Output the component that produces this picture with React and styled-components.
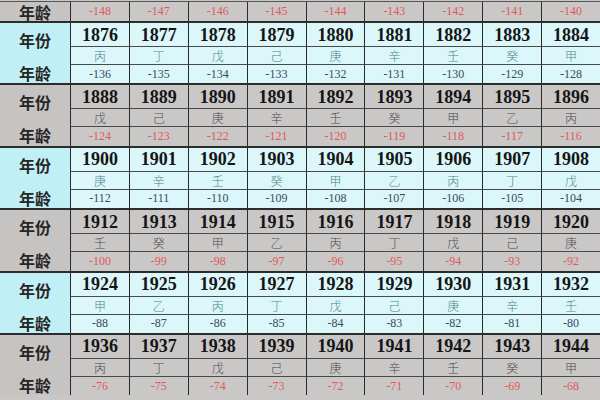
import React from 'react';
import styled, { createGlobalStyle } from 'styled-components';

const STEMS = '甲乙丙丁戊己庚辛壬癸';
const stemOf = (y) => STEMS[(((y - 4) % 10) + 10) % 10];
const ageOf = (y) => y - 2012;

const palettes = {
  gray: { label: '#c6c3c3', cell: '#cac7c7', stem: '#4a4a4a', age: '#e05a5a' },
  cyan: { label: '#c0f0f5', cell: '#dbf7fa', stem: '#4c8487', age: '#3a4a58' },
};

const GlobalStyle = createGlobalStyle`
  html, body {
    margin: 0;
    padding: 0;
    background: #cac7c7;
  }
  body {
    width: 600px;
    height: 400px;
    overflow: hidden;
  }
`;

const Page = styled.div`
  width: 600px;
  height: 400px;
  overflow: hidden;
  padding-top: 1px;
  box-sizing: border-box;
  background: #cac7c7;
`;

const Group = styled.div`
  display: grid;
  grid-template-columns: 70px repeat(9, 1fr);
  grid-template-rows: ${(p) => (p.$partial ? '19px' : '24px 18px 18.4px')};
  border-top: ${(p) => (p.$partial ? '1px solid #555' : '2px solid #2c2c2c')};
  background: ${(p) => palettes[p.$tone].cell};
`;

const Label = styled.div`
  grid-row: 1 / -1;
  display: flex;
  flex-direction: column;
  align-items: center;
  justify-content: ${(p) => (p.$partial ? 'center' : 'flex-start')};
  padding-top: ${(p) => (p.$partial ? '0' : '8px')};
  gap: 15px;
  background: ${(p) => palettes[p.$tone].label};
  font-family: "Noto Sans CJK SC", "Noto Sans", sans-serif;
  font-weight: 700;
  font-size: 16px;
  line-height: 18px;
  color: #262626;
  box-sizing: border-box;
`;

const Cell = styled.div`
  display: flex;
  align-items: center;
  justify-content: center;
  border-left: 1px solid #2a2a2a;
  box-sizing: border-box;
  min-width: 0;
`;

const YearCell = styled(Cell)`
  border-bottom: 1px solid #4a4a4a;
  font-family: "Liberation Serif", "Times New Roman", serif;
  font-weight: 700;
  font-size: 18px;
  color: #151515;
  padding-top: 1px;
`;

const StemCell = styled(Cell)`
  border-bottom: 1px solid #4a4a4a;
  font-family: "Noto Sans CJK SC", sans-serif;
  font-weight: 300;
  font-size: 12px;
  color: ${(p) => palettes[p.$tone].stem};
`;

const AgeCell = styled(Cell)`
  font-family: "Liberation Serif", "Times New Roman", serif;
  font-size: 12px;
  color: ${(p) => palettes[p.$tone].age};
`;

const yearsFrom = (start) => Array.from({ length: 9 }, (_, i) => start + i);

function YearGroup({ start, tone }) {
  const years = yearsFrom(start);
  return (
    <Group $tone={tone}>
      <Label $tone={tone}>
        <span>年份</span>
        <span>年龄</span>
      </Label>
      {years.map((y) => (
        <YearCell key={`y${y}`}>{y}</YearCell>
      ))}
      {years.map((y) => (
        <StemCell key={`s${y}`} $tone={tone}>{stemOf(y)}</StemCell>
      ))}
      {years.map((y) => (
        <AgeCell key={`a${y}`} $tone={tone}>{ageOf(y)}</AgeCell>
      ))}
    </Group>
  );
}

function PartialGroup({ start, tone }) {
  const years = yearsFrom(start);
  return (
    <Group $tone={tone} $partial>
      <Label $tone={tone} $partial>
        <span>年龄</span>
      </Label>
      {years.map((y) => (
        <AgeCell key={`a${y}`} $tone={tone}>{ageOf(y)}</AgeCell>
      ))}
    </Group>
  );
}

const groups = [
  { start: 1876, tone: 'cyan' },
  { start: 1888, tone: 'gray' },
  { start: 1900, tone: 'cyan' },
  { start: 1912, tone: 'gray' },
  { start: 1924, tone: 'cyan' },
  { start: 1936, tone: 'gray' },
];

export default function App() {
  return (
    <>
      <GlobalStyle />
      <Page>
        <PartialGroup start={1864} tone="gray" />
        {groups.map((g) => (
          <YearGroup key={g.start} start={g.start} tone={g.tone} />
        ))}
      </Page>
    </>
  );
}
